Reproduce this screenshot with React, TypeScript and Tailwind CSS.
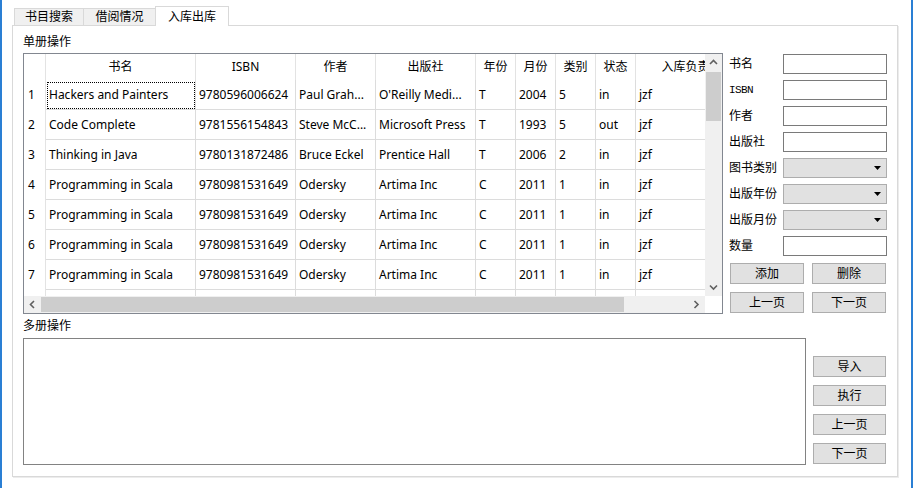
import React from "react";

const cols = [
  { label: "书名", w: 150 },
  { label: "ISBN", w: 100 },
  { label: "作者", w: 80 },
  { label: "出版社", w: 100 },
  { label: "年份", w: 40 },
  { label: "月份", w: 40 },
  { label: "类别", w: 40 },
  { label: "状态", w: 40 },
  { label: "入库负责人", w: 112 },
];

const scala = ["Programming in Scala", "9780981531649", "Odersky", "Artima Inc", "C", "2011", "1", "in", "jzf"];

// last row only peeks out a few pixels, its text is not visible
const rows = [
  ["Hackers and Painters", "9780596006624", "Paul Grah...", "O'Reilly Medi...", "T", "2004", "5", "in", "jzf"],
  ["Code Complete", "9781556154843", "Steve McC...", "Microsoft Press", "T", "1993", "5", "out", "jzf"],
  ["Thinking in Java", "9780131872486", "Bruce Eckel", "Prentice Hall", "T", "2006", "2", "in", "jzf"],
  scala,
  scala,
  scala,
  scala,
  ["", "", "", "", "", "", "", "", ""],
];

const ui = "font-['Noto_Sans','Noto_Sans_CJK_SC',sans-serif]";

function Chevron({ dir }: { dir: "up" | "down" | "left" | "right" }) {
  const pts = {
    up: "1,5 4.5,1.5 8,5",
    down: "1,1.5 4.5,5 8,1.5",
    left: "5,1 1.5,4.5 5,8",
    right: "1.5,1 5,4.5 1.5,8",
  }[dir];
  const vertical = dir === "up" || dir === "down";
  return (
    <svg width={vertical ? 9 : 7} height={vertical ? 7 : 9} viewBox={vertical ? "0 0 9 7" : "0 0 7 9"}>
      <polyline points={pts} fill="none" stroke="#606060" strokeWidth="1.6" />
    </svg>
  );
}

function Btn({ children, w = "w-[74px]" }: { children: React.ReactNode; w?: string }) {
  return (
    <div className={`${w} h-[21px] flex items-center justify-center bg-[#e1e1e1] border border-[#adadad] text-[12px] text-black`}>
      {children}
    </div>
  );
}

function TextBox() {
  return <div className="w-[104px] h-[20px] bg-white border border-[#7a7a7a]" />;
}

function Combo() {
  return (
    <div className="w-[104px] h-[20px] bg-[#e1e1e1] border border-[#adadad] flex items-center justify-end pr-[5px]">
      <svg width="7" height="4" viewBox="0 0 7 4">
        <polygon points="0,0 7,0 3.5,4" fill="#000" />
      </svg>
    </div>
  );
}

function FormRow({ label, children, mono }: { label: string; children: React.ReactNode; mono?: boolean }) {
  return (
    <div className="flex items-center h-[20px]">
      <div
        className={
          mono
            ? "w-[54px] text-[11px] tracking-[-0.6px] font-['Liberation_Mono',monospace] text-black"
            : "w-[54px] text-[12px] text-black"
        }
      >
        {label}
      </div>
      {children}
    </div>
  );
}

function Grid() {
  return (
    <div className="w-[700px] h-[261px] border border-[#828790] flex flex-col bg-white">
      <div className="flex">
        <div className="w-[681px] h-[242px] overflow-hidden">
          {/* header */}
          <div className="flex h-[26px]">
            <div className="w-[22px] shrink-0 border-r border-[#e3e3e3]" />
            {cols.map((c) => (
              <div
                key={c.label}
                style={{ width: c.w }}
                className="shrink-0 border-r border-[#e3e3e3] flex items-center justify-center text-[12px] text-black whitespace-nowrap"
              >
                {c.label}
              </div>
            ))}
          </div>
          {rows.map((r, i) => (
            <div key={i} className="flex h-[30px]">
              <div className="w-[22px] shrink-0 border-r border-[#e3e3e3] flex items-center pl-[4px] text-[12px] text-black">
                {r[0] ? i + 1 : ""}
              </div>
              {cols.map((c, j) => (
                <div
                  key={j}
                  style={{ width: c.w }}
                  className="relative shrink-0 border-r border-b border-[#dcdcdc] flex items-center pl-[3px] text-[12px] text-black whitespace-nowrap overflow-hidden"
                >
                  {i === 0 && j === 0 && (
                    <span className="absolute left-[1px] right-0 top-[2px] bottom-0 border border-dotted border-black" />
                  )}
                  {r[j]}
                </div>
              ))}
            </div>
          ))}
        </div>
        {/* vertical scrollbar */}
        <div className="w-[17px] h-[242px] bg-[#f0f0f0] flex flex-col items-center">
          <div className="h-[17px] w-full flex items-center justify-center">
            <Chevron dir="up" />
          </div>
          <div className="ml-[1px] self-start w-[15px] h-[49px] mt-[1px] bg-[#cdcdcd]" />
          <div className="flex-1" />
          <div className="h-[17px] w-full flex items-center justify-center">
            <Chevron dir="down" />
          </div>
        </div>
      </div>
      <div className="flex">
        <div className="w-[681px] h-[17px] bg-[#f0f0f0] flex items-center">
          <div className="w-[17px] h-full flex items-center justify-center">
            <Chevron dir="left" />
          </div>
          <div className="w-[583px] h-[15px] bg-[#cdcdcd]" />
          <div className="flex-1" />
          <div className="w-[17px] h-full flex items-center justify-center">
            <Chevron dir="right" />
          </div>
        </div>
        <div className="w-[17px] h-[17px] bg-white" />
      </div>
    </div>
  );
}

export default function App() {
  return (
    <div className={`w-[913px] h-[488px] bg-white border-l-2 border-r-2 border-[#2a7fd4] overflow-hidden ${ui}`}>
      {/* tabs */}
      <div className="ml-[12px] mt-[6px] h-[19px] flex items-end text-[12px] text-black">
        <div className="w-[70px] h-[17px] bg-[#f0f0f0] border border-b-0 border-[#d9d9d9] flex items-center justify-center">
          书目搜索
        </div>
        <div className="w-[71px] h-[17px] bg-[#f0f0f0] border-t border-[#d9d9d9] flex items-center justify-center">
          借阅情况
        </div>
        <div className="relative z-10 w-[74px] h-[20px] -mb-px bg-white border border-b-0 border-[#d9d9d9] flex items-center justify-center">
          入库出库
        </div>
      </div>

      {/* panel */}
      <div className="ml-[10px] w-[886px] h-[452px] border border-[#d9d9d9] bg-white shadow-[1px_1px_0_0_#ececec] pl-[10px] text-[12px] text-black">
        {/* single-book section */}
        <div className="flex">
          <div className="flex flex-col">
            <div className="h-[27px] flex items-end pb-[3px] leading-[16px]">单册操作</div>
            <Grid />
          </div>
          <div className="ml-[6px] pt-[28px] flex flex-col">
            <div className="flex flex-col gap-[6px]">
              <FormRow label="书名"><TextBox /></FormRow>
              <FormRow label="ISBN" mono><TextBox /></FormRow>
              <FormRow label="作者"><TextBox /></FormRow>
              <FormRow label="出版社"><TextBox /></FormRow>
              <FormRow label="图书类别"><Combo /></FormRow>
              <FormRow label="出版年份"><Combo /></FormRow>
              <FormRow label="出版月份"><Combo /></FormRow>
              <FormRow label="数量"><TextBox /></FormRow>
            </div>
            <div className="mt-[7px] ml-[1px] flex gap-[8px]">
              <Btn>添加</Btn>
              <Btn>删除</Btn>
            </div>
            <div className="mt-[8px] ml-[1px] flex gap-[8px]">
              <Btn>上一页</Btn>
              <Btn>下一页</Btn>
            </div>
          </div>
        </div>

        {/* multi-book section */}
        <div className="flex">
          <div className="flex flex-col">
            <div className="h-[24px] flex items-end pb-[4px] leading-[16px]">多册操作</div>
            <div className="w-[783px] h-[127px] bg-white border border-[#828282]" />
          </div>
          <div className="ml-[7px] pt-[42px] flex flex-col gap-[8px]">
            <Btn w="w-[73px]">导入</Btn>
            <Btn w="w-[73px]">执行</Btn>
            <Btn w="w-[73px]">上一页</Btn>
            <Btn w="w-[73px]">下一页</Btn>
          </div>
        </div>
      </div>
    </div>
  );
}
